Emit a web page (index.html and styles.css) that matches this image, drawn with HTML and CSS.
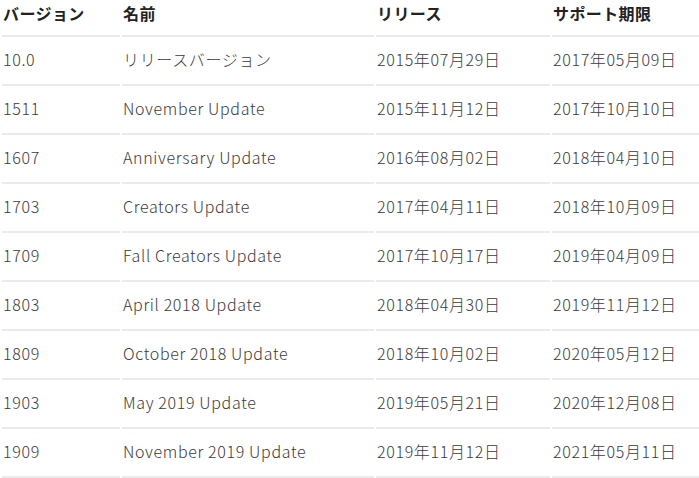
FILE: index.html
```html
<!DOCTYPE html>
<html lang="ja">
<head>
<meta charset="utf-8">
<link rel="stylesheet" href="styles.css">
</head>
<body>
<table class="releases">
  <colgroup>
    <col class="c-ver"><col class="c-name"><col class="c-rel"><col class="c-sup">
  </colgroup>
  <thead>
    <tr><th>バージョン</th><th>名前</th><th>リリース</th><th>サポート期限</th></tr>
  </thead>
  <tbody>
    <tr><td>10.0</td><td>リリースバージョン</td><td>2015年07月29日</td><td>2017年05月09日</td></tr>
    <tr><td>1511</td><td>November Update</td><td>2015年11月12日</td><td>2017年10月10日</td></tr>
    <tr><td>1607</td><td>Anniversary Update</td><td>2016年08月02日</td><td>2018年04月10日</td></tr>
    <tr><td>1703</td><td>Creators Update</td><td>2017年04月11日</td><td>2018年10月09日</td></tr>
    <tr><td>1709</td><td>Fall Creators Update</td><td>2017年10月17日</td><td>2019年04月09日</td></tr>
    <tr><td>1803</td><td>April 2018 Update</td><td>2018年04月30日</td><td>2019年11月12日</td></tr>
    <tr><td>1809</td><td>October 2018 Update</td><td>2018年10月02日</td><td>2020年05月12日</td></tr>
    <tr><td>1903</td><td>May 2019 Update</td><td>2019年05月21日</td><td>2020年12月08日</td></tr>
    <tr><td>1909</td><td>November 2019 Update</td><td>2019年11月12日</td><td>2021年05月11日</td></tr>
  </tbody>
</table>
</body>
</html>
```

FILE: styles.css
```css
html, body {
  margin: 0;
  padding: 0;
  background: #fff;
  overflow: hidden;
}
body {
  font-family: "Noto Sans CJK JP", "Noto Sans", sans-serif;
  font-size: 16px;
  color: #333;
}
.releases {
  border-collapse: separate;
  border-spacing: 2px;
  table-layout: fixed;
  width: 701px;
}
.c-ver { width: 118px; }
.c-name { width: 252px; }
.c-rel { width: 174px; }
.c-sup { width: 147px; }
.releases th,
.releases td {
  text-align: left;
  vertical-align: middle;
  border-bottom: 2px solid #ebebeb;
  white-space: nowrap;
}
.releases th {
  line-height: 23px;
  padding: 0 0 10px 1px;
  font-weight: bold;
  color: #222;
  letter-spacing: 0.4px;
}
.releases td {
  line-height: 25px;
  padding: 8px 0 12px 1px;
  font-weight: 300;
  color: #3a3a3a;
  letter-spacing: 0.65px;
}
```
